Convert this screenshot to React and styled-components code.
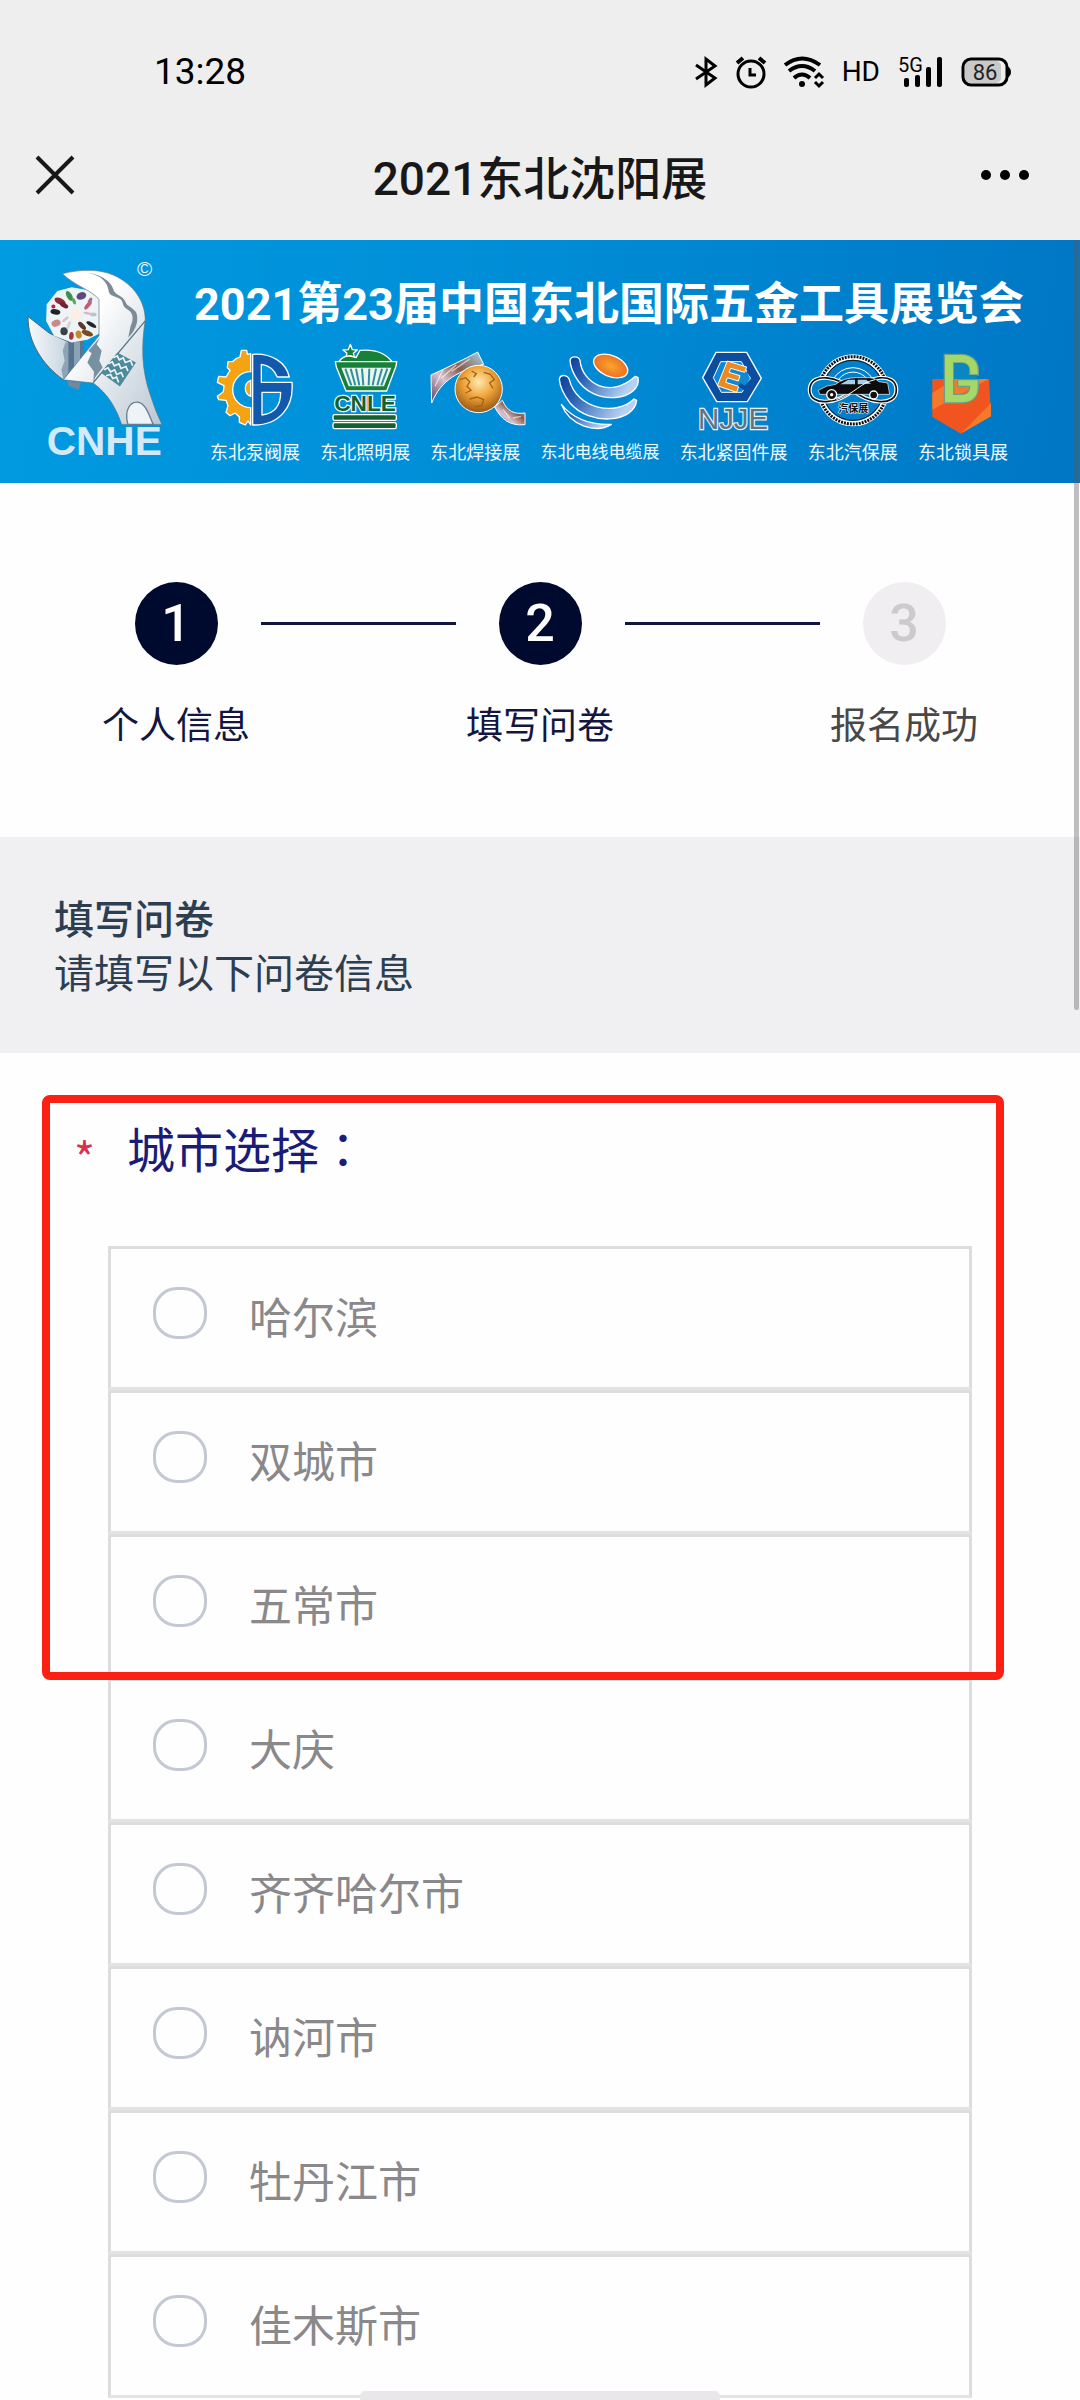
import React, { useState } from "react";
import styled, { createGlobalStyle } from "styled-components";

const GlobalStyle = createGlobalStyle`
  * {
    box-sizing: border-box;
  }

  body {
    margin: 0;
    background: #fefefe;
    font-family: "Noto Sans CJK SC", "Noto Sans", sans-serif;
  }

  svg {
    overflow: visible;
  }
`;

const Page = styled.div`
  position: relative;
  min-height: 100vh;
  overflow: hidden;
`;

const Header = styled.header`
  background: #eeeeee;
  color: #181818;
`;

const StatusBar = styled.div`
  display: flex;
  align-items: center;
  justify-content: space-between;
  height: 110px;
  padding: 34px 69px 0 154px;
  color: #000;
`;

const Clock = styled.span`
  font-family: "Roboto", sans-serif;
  font-size: 37px;
  line-height: 48px;
`;

const StatusIcons = styled.div`
  display: flex;
  align-items: center;
  gap: 18px;
`;

const Hd = styled.span`
  font-family: "Roboto", sans-serif;
  font-size: 28px;
  line-height: 48px;
`;

const NavBar = styled.nav`
  display: grid;
  grid-template-columns: 1fr auto 1fr;
  align-items: center;
  height: 130px;
  padding: 0 33px;
`;

const NavTitle = styled.h1`
  margin: 0;
  padding-top: 8px;
  font-family: "Roboto", "Noto Sans CJK SC", sans-serif;
  font-size: 46px;
  font-weight: 500;
  line-height: 64px;
`;

const IconButton = styled.button`
  display: flex;
  justify-self: ${(props) => props.$side};
  padding: 0;
  border: 0;
  background: none;
  color: inherit;
`;

const Banner = styled.section`
  display: flex;
  align-items: flex-start;
  padding: 16px 54px 20px 25px;
  background: linear-gradient(100deg, #009be1 0%, #008cd6 50%, #0076c4 100%);
`;

const BannerBody = styled.div`
  flex: 1;
  margin: 15px 0 0 27px;
`;

const BannerTitle = styled.h2`
  margin: 0 0 4px;
  color: #fff;
  font-family: "Roboto", "Noto Sans CJK SC", sans-serif;
  font-size: 45px;
  font-weight: 700;
  line-height: 68px;
  text-align: center;
  white-space: nowrap;
`;

const Shows = styled.div`
  display: flex;
  justify-content: space-between;
  padding: 0 18px;
`;

const Show = styled.div`
  display: flex;
  flex-direction: column;
  align-items: center;
  gap: 6px;
  color: #f2faff;
  font-size: ${(props) => (props.$long ? "17px" : "18px")};
  line-height: 24px;
  white-space: nowrap;

  svg {
    margin: 0 -8px;
  }
`;

const Steps = styled.ol`
  display: flex;
  justify-content: space-between;
  margin: 0;
  padding: 99px 102px 86px;
  list-style: none;
`;

const Step = styled.li`
  display: flex;
  flex-direction: column;
  align-items: center;
  gap: 30px;
  color: ${(props) => (props.$done ? "#14163f" : "#484848")};
  font-size: 37px;
  line-height: 56px;
`;

const StepNumber = styled.span`
  display: flex;
  align-items: center;
  justify-content: center;
  width: 83px;
  height: 83px;
  border-radius: 50%;
  background: ${(props) => (props.$done ? "#000a2e" : "#f0eef1")};
  color: ${(props) => (props.$done ? "#fff" : "#cbcacc")};
  font-family: "Roboto", sans-serif;
  font-size: 52px;
  font-weight: 500;
`;

const StepLine = styled.li`
  flex: 1;
  max-width: 195px;
  height: 3px;
  margin-top: 40px;
  background: #10163d;
`;

const Intro = styled.section`
  padding: 53px 54px 55px;
  background: #f0eff1;
  color: #2c3e50;
  font-size: 40px;
  line-height: 54px;
`;

const IntroTitle = styled.h3`
  margin: 0;
  font-size: 40px;
  font-weight: 500;
`;

const IntroText = styled.p`
  margin: 0;
`;

const Question = styled.fieldset`
  position: relative;
  margin: 0;
  padding: 62px 108px 0;
  border: 0;
`;

const QuestionTitle = styled.div`
  display: flex;
  align-items: center;
  gap: 32px;
  margin: 0 0 67px -34px;
  color: #1b1b78;
  font-size: 48px;
  line-height: 64px;
`;

const Required = styled.span`
  padding-top: 20px;
  color: #d9304f;
  font-size: 45px;
  line-height: 44px;
`;

const Colon = styled.span`
  font-family: "Noto Sans CJK TC", sans-serif;
`;

const Option = styled.label`
  display: flex;
  align-items: flex-start;
  gap: 42px;
  height: 144px;
  padding: 38px 42px;
  border: 3px solid #dddcdf;
  border-bottom-color: #e4e4e6;
  color: #8a888a;
  font-size: 43px;
  line-height: 56px;
`;

const Radio = styled.input`
  appearance: none;
  width: 54px;
  height: 52px;
  margin: 0;
  border: 3px solid #c3c8d3;
  border-radius: 24px;

  &:checked {
    border-width: 14px;
    border-color: #1b1b78;
  }
`;

const Highlight = styled.div`
  position: absolute;
  top: 42px;
  left: 42px;
  right: 76px;
  height: 585px;
  border: 8px solid #fb2013;
  border-radius: 8px;
  pointer-events: none;
`;

const ScrollThumb = styled.div`
  position: absolute;
  top: 240px;
  right: 1px;
  width: 5px;
  height: 770px;
  border-radius: 3px;
  background: rgba(90, 90, 95, 0.38);
`;

const HomeIndicator = styled.div`
  position: fixed;
  bottom: 0;
  left: 50%;
  width: 360px;
  height: 9px;
  margin-left: -180px;
  border-radius: 5px 5px 0 0;
  background: #e9e7e9;
`;

const BluetoothIcon = () => (
  <svg width="24" height="32" viewBox="0 0 24 32" fill="none" stroke="currentColor" strokeWidth="3">
    <path d="M2 9 21 22 12 29V3L21 10 2 23" />
  </svg>
);

const AlarmIcon = () => (
  <svg width="30" height="32" viewBox="0 0 30 32" fill="none" stroke="currentColor" strokeWidth="3">
    <circle cx="15" cy="18" r="13" />
    <path d="M14 12v7h6" />
    <path d="M1 7 7 2M29 7 23 2" strokeWidth="4" />
  </svg>
);

const WifiIcon = () => (
  <svg width="40" height="32" viewBox="0 0 40 32" fill="none" stroke="currentColor" strokeWidth="4">
    <path d="M1 9Q18-4 36 9M5 15Q18 5 31 15M10 22Q18 15 26 22" />
    <circle cx="18" cy="28" r="3" fill="currentColor" stroke="none" />
    <path d="M31 22 35 18 39 22M31 26 35 30 39 26" strokeWidth="3" />
  </svg>
);

const SignalIcon = () => (
  <svg width="45" height="32" viewBox="0 0 45 32" fill="currentColor">
    <text x="0" y="16" fontSize="20" fontFamily="Roboto, sans-serif">
      5G
    </text>
    <rect x="6" y="22" width="5" height="9" rx="2" />
    <rect x="17" y="19" width="5" height="12" rx="2" />
    <rect x="28" y="11" width="5" height="20" rx="2" />
    <rect x="39" y="1" width="5" height="30" rx="2" />
  </svg>
);

const BatteryIcon = () => (
  <svg width="50" height="30" viewBox="0 0 50 30">
    <rect x="4" y="4" width="36" height="22" rx="5" fill="#c9c9c9" />
    <rect x="2" y="2" width="44" height="26" rx="8" fill="none" stroke="#000" strokeWidth="3" />
    <path d="M46 9q4 2 4 6t-4 6z" />
    <text x="24" y="23" textAnchor="middle" fontSize="22" fontFamily="Roboto, sans-serif" fill="#222">
      86
    </text>
  </svg>
);

const CloseIcon = () => (
  <svg width="44" height="44" viewBox="0 0 44 44" stroke="currentColor" strokeWidth="4">
    <path d="M4 4 40 40M40 4 4 40" />
  </svg>
);

const MoreIcon = () => (
  <svg width="67" height="20" viewBox="0 0 67 20" fill="#000">
    <circle cx="6" cy="10" r="5" />
    <circle cx="25" cy="10" r="5" />
    <circle cx="44" cy="10" r="5" />
  </svg>
);

// the tools spread over the nut: x, y, rx, ry, angle, colour
const beads = [
  [180, 196, 18, 9, 25, "#8f2a3c"],
  [192, 208, 14, 7, 30, "#6d2433"],
  [208, 180, 16, 8, 60, "#3f8f4f"],
  [222, 196, 10, 5, 70, "#5aa868"],
  [244, 180, 15, 11, -20, "#5b4a7a"],
  [264, 208, 16, 6, -50, "#c45a78"],
  [270, 194, 10, 5, -60, "#a86a8e"],
  [166, 228, 15, 8, 10, "#1d222c"],
  [168, 262, 14, 10, -20, "#c98a8a"],
  [192, 286, 11, 12, 0, "#3b4148"],
  [214, 300, 7, 12, 5, "#a33a3a"],
  [236, 296, 9, 12, -15, "#c58a2a"],
  [262, 292, 18, 8, 20, "#7a4a22"],
  [246, 270, 15, 7, 45, "#5a3a2a"],
  [274, 266, 17, 6, 30, "#20242c"],
  [280, 236, 10, 6, 0, "#b7c4d4"],
  [160, 212, 6, 6, 0, "#b23"],
  [196, 250, 12, 4, -40, "#d8c0c8"],
  [206, 268, 5, 13, 20, "#cfd6dc"],
  [262, 232, 12, 4, 10, "#d9b8c6"],
];

const WrenchLogo = () => (
  <svg width="140" height="203" viewBox="75 60 420 610">
    <defs>
      <linearGradient id="steel" x1="0" y1="0" x2="1" y2="1">
        <stop offset="30%" stopColor="#ffffff" />
        <stop offset="100%" stopColor="#b9c7d3" />
      </linearGradient>
      <linearGradient id="jaw" x1="0" y1="0" x2="1" y2="0">
        <stop offset="0" stopColor="#f6f9fb" />
        <stop offset="1" stopColor="#c6d4df" />
      </linearGradient>
    </defs>
    <path d="M202 435 243 440 236 463 205 450Z" fill="#6f8aa0" />
    <path d="M200 312 250 312 250 366 200 420Z" fill="#55758f" />
    <path d="M222 318H240V376L222 396Z" fill="#8ba3b6" />
    <path d="M84 242 148 292 205 318 190 432C128 388 82 318 84 242Z" fill="url(#jaw)" stroke="#4c6577" strokeWidth="3" />
    <path d="M196 320 188 345 194 375 184 400 190 432 205 410V320Z" fill="#8fa5b5" />
    <path d="M140 205 172 165 215 154 262 162 300 190V292L262 312 215 320 162 300 138 255Z" fill="#eef3f6" />
    {beads.map(([x, y, rx, ry, angle, color]) => (
      <ellipse key={`${x}-${y}`} cx={x} cy={y} rx={rx} ry={ry} fill={color} transform={`rotate(${angle} ${x} ${y})`} />
    ))}
    <circle cx="226" cy="236" r="18" fill="#fbeee6" />
    <path
      d="M187 113C250 98 300 100 342 118C400 145 436 195 436 252C424 330 424 400 452 480Q468 530 486 566H365C350 520 325 475 280 442L190 432 297 300V190C270 160 225 150 187 113Z"
      fill="url(#steel)"
      stroke="#5d7688"
      strokeWidth="2"
    />
    <path
      d="M255 110C290 112 320 130 325 160C328 185 345 178 362 190C372 200 365 212 385 222C400 232 402 250 392 270L385 305C410 280 418 250 408 228C395 212 380 212 376 196C365 176 350 180 342 165C335 135 300 112 255 110Z"
      fill="#7d8b95"
    />
    <path d="M300 305 290 325 305 345 298 375 308 395 285 425 280 440 282 408 262 380 275 352 265 345Z" fill="#78909f" />
    <path d="M436 255 280 440" stroke="#5d7688" strokeWidth="4" />
    <path d="M352 350 408 380 360 452 305 412Z" fill="#4d8a9b" />
    <path
      d="M340 366 352 360 358 372 370 366 376 380 392 374 398 390M325 384 337 378 343 390 357 384 363 398 378 392 384 406M312 402 324 396 332 408 344 402 350 416 364 410 370 424M318 420 332 416 338 428 350 424 356 440"
      fill="none"
      stroke="#eef5f8"
      strokeWidth="5"
    />
    <path d="M384 566C372 525 390 498 412 499C436 500 446 535 460 566Z" fill="#eef3f7" stroke="#667c8c" strokeWidth="4" />
    <text x="411" y="121" fontSize="62" fill="#e6f6ff" fontFamily="Liberation Sans, sans-serif">
      ©
    </text>
    <text x="140" y="657" fontSize="122" fontWeight="700" fill="#d3e9f8" fontFamily="Liberation Sans, sans-serif">
      CNHE
    </text>
  </svg>
);

const PumpLogo = () => (
  <svg width="80" height="90" viewBox="645 320 240 270">
    <g fill="#f6a313" stroke="#fff" strokeWidth="4">
      <path
        d="M752 352 742 354 740 342 724 342 720 362 708 367 697 376 684 376 682 394 690 402 678 422 656 420 652 438 672 448 670 466 652 480 656 490 678 492 684 508 678 528 690 538 706 530 718 542 718 558 736 566 744 554 752 566V514A54 54 0 0 1 752 406Z"
        strokeLinejoin="round"
      />
      <path d="M752 432A26 26 0 0 0 752 480Z" />
    </g>
    <path
      d="M758 354C815 350 858 378 868 422H832C820 395 803 386 784 384V438H876C882 510 840 568 758 566ZM786 468V536C822 532 842 508 842 468Z"
      fill="#1259ab"
      fillRule="evenodd"
      stroke="#fff"
      strokeWidth="4"
      strokeLinejoin="round"
    />
  </svg>
);

const LightLogo = () => (
  <svg width="66" height="90" viewBox="990 320 198 270">
    <g stroke="#fff" strokeWidth="4" strokeLinejoin="round">
      <path d="M1045 324 1051 340 1066 341 1054 351 1059 367 1045 358 1030 367 1035 351 1023 341 1039 340Z" fill="#17813a" />
      <path d="M1010 376Q1030 350 1062 364L1074 342Q1140 336 1170 376Z" fill="#17813a" />
      <path d="M1000 376H1184L1182 390 1154 464H1032L1003 392Z" fill="#17813a" />
    </g>
    <path d="M1018 394H1168L1146 450H1040Z" fill="#eaf6ee" />
    <path
      d="M1030 397 1048 447M1046 397 1060 447M1062 397 1072 447M1080 397 1084 447M1102 397 1100 447M1122 397 1112 447M1140 397 1126 447M1156 397 1138 447"
      stroke="#2f8f9d"
      strokeWidth="6"
    />
    <text
      x="1089"
      y="525"
      textAnchor="middle"
      fontSize="68"
      fontWeight="700"
      fontFamily="Liberation Sans, sans-serif"
      fill="#12622f"
      stroke="#fff"
      strokeWidth="7"
      paintOrder="stroke"
    >
      CNLE
    </text>
    <g fill="#12622f" stroke="#fff" strokeWidth="4">
      <rect x="993" y="535" width="190" height="17" rx="5" />
      <rect x="993" y="559" width="190" height="18" rx="5" />
    </g>
  </svg>
);

const WeldLogo = () => (
  <svg width="96" height="90" viewBox="202 320 288 270">
    <defs>
      <radialGradient id="globe" cx="50%" cy="35%" r="70%">
        <stop offset="0" stopColor="#ffe9ae" />
        <stop offset="45%" stopColor="#f0a53a" />
        <stop offset="1" stopColor="#8a4a0c" />
      </radialGradient>
      <linearGradient id="ribbon" x1="0" y1="1" x2="1" y2="0">
        <stop offset="0" stopColor="#5d3a55" />
        <stop offset="35%" stopColor="#d9c4d2" />
        <stop offset="60%" stopColor="#8b5a4a" />
        <stop offset="1" stopColor="#9fd6ee" />
      </linearGradient>
    </defs>
    <g stroke="#fff" strokeWidth="3" fill="url(#ribbon)">
      <path d="M214 416C262 394 312 370 354 347L372 384C300 402 244 430 216 500Z" />
      <path d="M405 512 428 492C444 526 462 534 496 530V565C450 570 424 548 405 512Z" />
    </g>
    <path d="M226 450 250 400M246 425 290 385M276 405 330 368M430 520 450 545M460 545 484 540" stroke="#fff" strokeWidth="4" opacity="0.6" />
    <circle cx="357" cy="458" r="71" fill="url(#globe)" stroke="#fff" strokeWidth="3" />
    <path
      d="M300 430 318 424 330 436 322 450 334 462 318 470M372 408 392 414 404 430 390 440 400 456M330 488 352 482 372 490 366 508 346 512M336 404 350 412 342 422"
      fill="none"
      stroke="#a3621a"
      strokeWidth="4"
    />
  </svg>
);

const CableLogo = () => (
  <svg width="84" height="90" viewBox="584 320 252 270">
    <defs>
      <linearGradient id="cable" x1="0" y1="0" x2="1" y2="0.4">
        <stop offset="0" stopColor="#0b3f98" />
        <stop offset="35%" stopColor="#2b62b4" />
        <stop offset="1" stopColor="#b6d2f2" />
      </linearGradient>
      <radialGradient id="sun">
        <stop offset="0" stopColor="#f6a72b" />
        <stop offset="1" stopColor="#ee6f23" />
      </radialGradient>
    </defs>
    <g stroke="#fff" strokeWidth="4" fill="url(#cable)" strokeLinejoin="round">
      <path d="M620 372C622 358 646 358 650 372C656 440 740 490 816 420L824 424C838 488 690 520 636 420Q622 396 620 372Z" />
      <path d="M588 428C592 412 614 416 618 430C640 520 760 540 812 488L820 492C812 560 680 570 620 500Q590 460 588 428Z" />
      <path d="M594 504C630 548 680 566 744 564C700 592 620 570 594 504Z" />
    </g>
    <ellipse cx="742" cy="389" rx="54" ry="31" transform="rotate(23 742 389)" fill="url(#sun)" stroke="#fff" strokeWidth="4" />
  </svg>
);

const FastenerLogo = () => (
  <svg width="74" height="90" viewBox="1005 320 222 270">
    <path d="M1022 424 1062 348H1154L1198 426 1156 496H1064Z" fill="#0b4ea0" stroke="#fff" strokeWidth="4" />
    <path d="M1054 424 1076 376H1138L1166 426 1140 468H1078Z" fill="#0e8ad4" stroke="#fff" strokeWidth="3" />
    <path
      d="M1096 374 1154 392 1148 408 1106 396 1101 408 1134 418 1129 434 1096 424 1091 438 1130 450 1124 468 1066 448Z"
      fill="#ee8a1d"
      stroke="#fff"
      strokeWidth="3"
    />
    <path d="M1158 404 1176 426 1148 456 1132 444" fill="none" stroke="#0b4ea0" strokeWidth="12" />
    <text
      x="1113"
      y="577"
      textAnchor="middle"
      fontSize="88"
      fontFamily="Liberation Sans, sans-serif"
      fill="#5f7482"
      stroke="#e8f2f8"
      strokeWidth="7"
      paintOrder="stroke"
    >
      NJJE
    </text>
  </svg>
);

const AutoLogo = () => (
  <svg width="92" height="90" viewBox="252 320 276 270">
    <g fill="none">
      <circle cx="390" cy="462" r="100" stroke="#fff" strokeWidth="16" />
      <circle cx="390" cy="462" r="101" stroke="#111" strokeWidth="9" strokeDasharray="6 3" />
      <circle cx="390" cy="462" r="90" stroke="#111" strokeWidth="3" />
      <path d="M330 430A68 68 0 0 1 450 430M346 430A54 54 0 0 1 434 430" stroke="#fff" strokeWidth="3" />
      <path
        d="M390 462C350 420 262 405 260 460C260 515 350 500 390 462C430 420 520 405 520 460C520 515 430 500 390 462Z"
        stroke="#fff"
        strokeWidth="12"
        fill="#0082cd"
      />
      <path
        d="M390 462C350 420 262 405 260 460C260 515 350 500 390 462C430 420 520 405 520 460C520 515 430 500 390 462Z"
        stroke="#111"
        strokeWidth="5"
      />
    </g>
    <path d="M286 462Q310 446 338 444Q362 424 400 424H440Q456 424 468 436L494 440 500 474H290Z" fill="#0c0c0c" stroke="#fff" strokeWidth="2" />
    <path d="M352 444 376 430H396V444ZM404 430H430L444 442 404 444Z" fill="#a9cfe8" />
    <path d="M340 490C400 470 410 440 456 430" fill="none" stroke="#fff" strokeWidth="3" />
    <g fill="#111" stroke="#fff" strokeWidth="4">
      <circle cx="326" cy="475" r="15" />
      <circle cx="452" cy="476" r="12" />
    </g>
    <circle cx="326" cy="475" r="5" fill="#fff" />
    <text
      x="391"
      y="527"
      textAnchor="middle"
      fontSize="30"
      fontWeight="700"
      fontFamily="Noto Sans CJK SC, sans-serif"
      fill="#111"
      stroke="#cfe8f7"
      strokeWidth="4"
      paintOrder="stroke"
    >
      汽保展
    </text>
  </svg>
);

const LockLogo = () => (
  <svg width="64" height="90" viewBox="628 320 192 270">
    <path d="M632 428H802L808 540 718 592 632 542Z" fill="#f1541f" />
    <path d="M632 470 700 428H802L632 520ZM720 590 808 500V540Z" fill="#f5792a" />
    <path
      d="M668 354H718C750 354 770 374 770 402V416H744V404C744 388 734 380 718 380H696V474H720C736 474 744 464 744 450H708V430H770V452C770 484 750 500 718 500H668Z"
      fill="#a5d867"
      stroke="#6d9c8a"
      strokeWidth="4"
    />
    <path d="M698 380H718C734 380 742 388 742 404V416H766V428H698Z" fill="#0a86c0" />
  </svg>
);

const shows = [
  { name: "东北泵阀展", Logo: PumpLogo },
  { name: "东北照明展", Logo: LightLogo },
  { name: "东北焊接展", Logo: WeldLogo },
  { name: "东北电线电缆展", Logo: CableLogo },
  { name: "东北紧固件展", Logo: FastenerLogo },
  { name: "东北汽保展", Logo: AutoLogo },
  { name: "东北锁具展", Logo: LockLogo },
];

const steps = [
  { label: "个人信息", done: true },
  { label: "填写问卷", done: true },
  { label: "报名成功", done: false },
];

const cities = ["哈尔滨", "双城市", "五常市", "大庆", "齐齐哈尔市", "讷河市", "牡丹江市", "佳木斯市"];

function App() {
  const [city, setCity] = useState("");

  return (
    <Page>
      <GlobalStyle />
      <Header>
        <StatusBar>
          <Clock>13:28</Clock>
          <StatusIcons>
            <BluetoothIcon />
            <AlarmIcon />
            <WifiIcon />
            <Hd>HD</Hd>
            <SignalIcon />
            <BatteryIcon />
          </StatusIcons>
        </StatusBar>
        <NavBar>
          <IconButton type="button" aria-label="关闭" $side="start">
            <CloseIcon />
          </IconButton>
          <NavTitle>2021东北沈阳展</NavTitle>
          <IconButton type="button" aria-label="更多" $side="end">
            <MoreIcon />
          </IconButton>
        </NavBar>
      </Header>

      <Banner>
        <WrenchLogo />
        <BannerBody>
          <BannerTitle>2021第23届中国东北国际五金工具展览会</BannerTitle>
          <Shows>
            {shows.map(({ name, Logo }) => (
              <Show key={name} $long={name.length > 6}>
                <Logo />
                <span>{name}</span>
              </Show>
            ))}
          </Shows>
        </BannerBody>
      </Banner>

      <Steps>
        {steps.map((step, i) => (
          <React.Fragment key={step.label}>
            {i > 0 && <StepLine aria-hidden="true" />}
            <Step $done={step.done}>
              <StepNumber $done={step.done}>{i + 1}</StepNumber>
              <span>{step.label}</span>
            </Step>
          </React.Fragment>
        ))}
      </Steps>

      <Intro>
        <IntroTitle>填写问卷</IntroTitle>
        <IntroText>请填写以下问卷信息</IntroText>
      </Intro>

      <Question aria-labelledby="city-title">
        <QuestionTitle id="city-title">
          <Required>*</Required>
          <span>
            城市选择<Colon>：</Colon>
          </span>
        </QuestionTitle>
        {cities.map((name) => (
          <Option key={name}>
            <Radio type="radio" name="city" value={name} checked={city === name} onChange={() => setCity(name)} />
            <span>{name}</span>
          </Option>
        ))}
        <Highlight />
      </Question>

      <ScrollThumb />
      <HomeIndicator />
    </Page>
  );
}

export default App;
